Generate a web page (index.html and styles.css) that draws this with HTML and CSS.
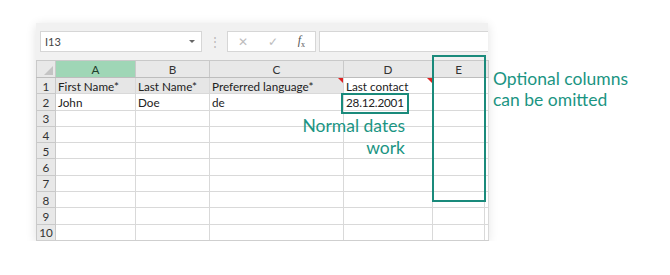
FILE: index.html
```html
<!DOCTYPE html>
<html lang="en">
<head>
    <meta charset="UTF-8">
    <title>Import sheet example</title>
    <link rel="stylesheet" href="styles.css">
</head>
<body>
    <div class="page">
        <div class="sheet">
            <div class="toolbar">
                <div class="name-box">
                    <span>I13</span>
                    <span class="name-arrow"></span>
                </div>
                <div class="grip">⋮</div>
                <div class="formula-buttons">
                    <span class="fbtn">✕</span>
                    <span class="fbtn">✓</span>
                    <span class="fbtn fx"><i>f</i><sub>x</sub></span>
                </div>
                <div class="formula-input"></div>
            </div>

            <table class="grid">
                <colgroup>
                    <col class="c-head">
                    <col class="c-a">
                    <col class="c-b">
                    <col class="c-c">
                    <col class="c-d">
                    <col class="c-e">
                    <col class="c-f">
                </colgroup>
                <tr class="col-heads">
                    <th class="corner"><span class="corner-tri"></span></th>
                    <th class="selected">A</th>
                    <th>B</th>
                    <th>C</th>
                    <th>D</th>
                    <th>E</th>
                    <th></th>
                </tr>
                <tr>
                    <th>1</th>
                    <td class="filled">First Name*</td>
                    <td class="filled">Last Name*</td>
                    <td class="filled has-note">Preferred language*</td>
                    <td class="has-note">Last contact</td>
                    <td></td>
                    <td></td>
                </tr>
                <tr>
                    <th>2</th>
                    <td>John</td>
                    <td>Doe</td>
                    <td>de</td>
                    <td class="date">28.12.2001</td>
                    <td></td>
                    <td></td>
                </tr>
                <tr><th>3</th><td></td><td></td><td></td><td></td><td></td><td></td></tr>
                <tr><th>4</th><td></td><td></td><td></td><td></td><td></td><td></td></tr>
                <tr><th>5</th><td></td><td></td><td></td><td></td><td></td><td></td></tr>
                <tr><th>6</th><td></td><td></td><td></td><td></td><td></td><td></td></tr>
                <tr><th>7</th><td></td><td></td><td></td><td></td><td></td><td></td></tr>
                <tr><th>8</th><td></td><td></td><td></td><td></td><td></td><td></td></tr>
                <tr><th>9</th><td></td><td></td><td></td><td></td><td></td><td></td></tr>
                <tr><th>10</th><td></td><td></td><td></td><td></td><td></td><td></td></tr>
            </table>

            <div class="mark mark-date"></div>
            <div class="mark mark-column"></div>
            <div class="note note-dates">Normal dates<br>work</div>
        </div>

        <div class="note note-optional">Optional columns<br>can be omitted</div>
    </div>
</body>
</html>
```

FILE: styles.css
```css
/* General */
body {
    margin: 0;
    background: #ffffff;
    font-family: Lato, "Open Sans", sans-serif;
    color: #222;
}

.page {
    display: flex;
    align-items: flex-start;
    padding: 23px 0 0 36px;
}

/* Spreadsheet window */
.sheet {
    position: relative;
    width: 452px;
    background: #f1f1f1;
    box-shadow: 0 2px 10px rgba(0, 0, 0, 0.12);
}

.toolbar {
    display: flex;
    align-items: center;
    height: 37px;
    padding-left: 4px;
}

.name-box {
    display: flex;
    align-items: center;
    justify-content: space-between;
    width: 150px;
    height: 19px;
    padding: 0 6px 0 4px;
    background: #fff;
    border: 1px solid #d6d6d6;
    font-size: 11px;
    color: #444;
}

.name-arrow {
    width: 0;
    height: 0;
    border-left: 3px solid transparent;
    border-right: 3px solid transparent;
    border-top: 3px solid #666;
}

.grip {
    width: 25px;
    text-align: center;
    font-size: 12px;
    color: #b8b8b8;
}

.formula-buttons {
    display: flex;
    align-items: center;
    justify-content: space-around;
    width: 87px;
    height: 19px;
    background: #fff;
    border: 1px solid #d6d6d6;
    color: #bdbdbd;
    font-size: 12px;
}

.fbtn.fx {
    font-family: "Liberation Serif", serif;
    color: #555;
    font-size: 12px;
}

.fbtn.fx sub {
    font-size: 8px;
}

.formula-input {
    flex: 1;
    height: 19px;
    margin-left: 3px;
    background: #fff;
    border: 1px solid #d6d6d6;
    border-right: none;
}

/* Grid */
.grid {
    width: 452px;
    table-layout: fixed;
    border-collapse: collapse;
    background: #fff;
    font-size: 11.7px;
}

.c-head { width: 19px; }
.c-a { width: 80px; }
.c-b { width: 74px; }
.c-c { width: 134px; }
.c-d { width: 89px; }
.c-e { width: 52px; }
.c-f { width: 4px; }

.grid tr {
    height: 16.3px;
}

.grid td {
    padding: 0 0 0 2px;
    border: 1px solid #d9d9d9;
    white-space: nowrap;
    overflow: hidden;
    line-height: 14px;
}

.grid td.date {
    letter-spacing: -0.2px;
}

.grid th {
    padding: 0;
    font-weight: normal;
    background: #e8e8e8;
    border: 1px solid #c9c9c9;
    color: #333;
    line-height: 14px;
}

.col-heads th {
    height: 16px;
    border-bottom-color: #bdbdbd;
}

.col-heads th.selected {
    background: #9fd6b6;
    color: #1f3d2c;
}

.grid tr:last-child th,
.grid tr:last-child td {
    border-bottom-color: #cfcfcf;
}

.corner {
    position: relative;
}

.corner-tri {
    position: absolute;
    right: 2px;
    bottom: 2px;
    width: 0;
    height: 0;
    border-left: 9px solid transparent;
    border-bottom: 9px solid #c4c4c4;
}

.grid td.filled {
    background: #e6e6e6;
}

.grid td.has-note {
    position: relative;
}

.grid td.has-note::after {
    content: "";
    position: absolute;
    top: 0;
    right: 0;
    border-left: 5px solid transparent;
    border-top: 5px solid #e02020;
}

/* Annotations */
.mark {
    position: absolute;
    border: 2px solid #1a8a7b;
}

.mark-date {
    left: 305px;
    top: 70px;
    width: 64px;
    height: 17px;
}

.mark-column {
    left: 396px;
    top: 32px;
    width: 50px;
    height: 143px;
}

.note {
    color: #1b9583;
    font-size: 17.5px;
    line-height: 22px;
}

.note-dates {
    position: absolute;
    right: 83px;
    top: 92px;
    text-align: right;
}

.note-optional {
    margin: 45px 0 0 5px;
    line-height: 21px;
    font-size: 17.5px;
}
```
